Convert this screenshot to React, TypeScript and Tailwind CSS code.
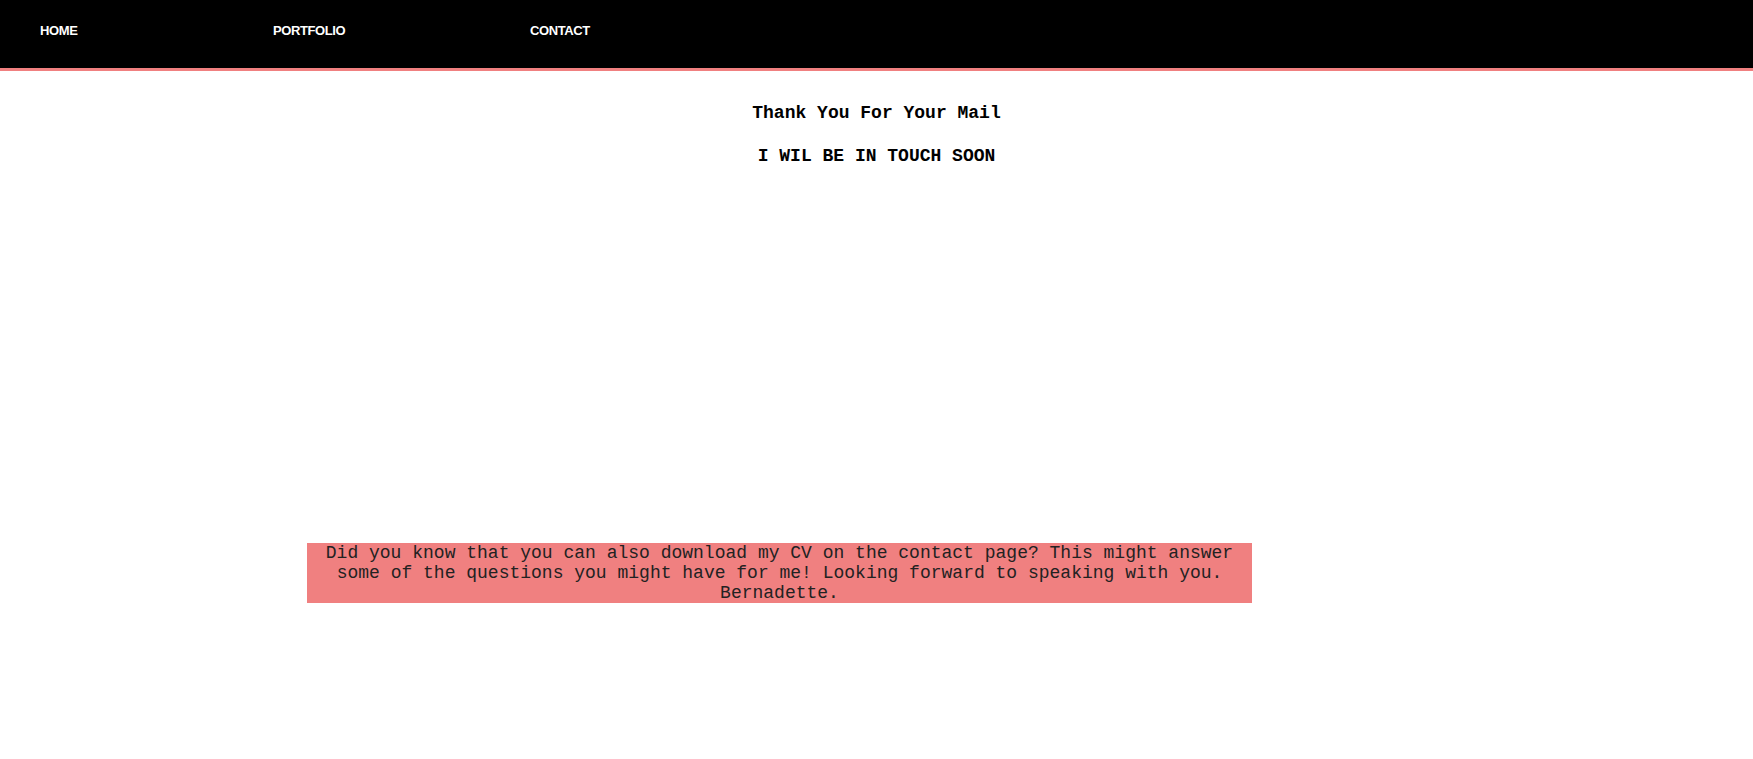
export default function App() {
  return (
    <div className="min-h-[759px] bg-white">
      {/* barra de navegação */}
      <nav className="h-[71px] bg-black border-b-[3px] border-[#f08080]">
        <ul className="flex pt-[23px] pl-[40px] font-['Liberation_Sans',Arial,sans-serif] text-[13px] leading-[15px] font-bold text-white tracking-[-0.4px]">
          <li className="w-[233px]">HOME</li>
          <li className="w-[257px]">PORTFOLIO</li>
          <li>CONTACT</li>
        </ul>
      </nav>

      <main className="font-['Liberation_Mono','Courier_New',monospace]">
        <div className="pt-[32px] text-center text-[18px] leading-[20px] font-bold text-black">
          <h3>Thank You For Your Mail</h3>
          <h3 className="mt-[23px]">I WIL BE IN TOUCH SOON</h3>
        </div>

        <div className="mt-[377px] ml-[307px] w-[945px] bg-[#f08080] text-center text-[18px] leading-[20px] text-[#222]">
          <p>
            Did you know that you can also download my CV on the contact page? This might answer some of the
            questions you might have for me! Looking forward to speaking with you. Bernadette.
          </p>
        </div>
      </main>
    </div>
  )
}
